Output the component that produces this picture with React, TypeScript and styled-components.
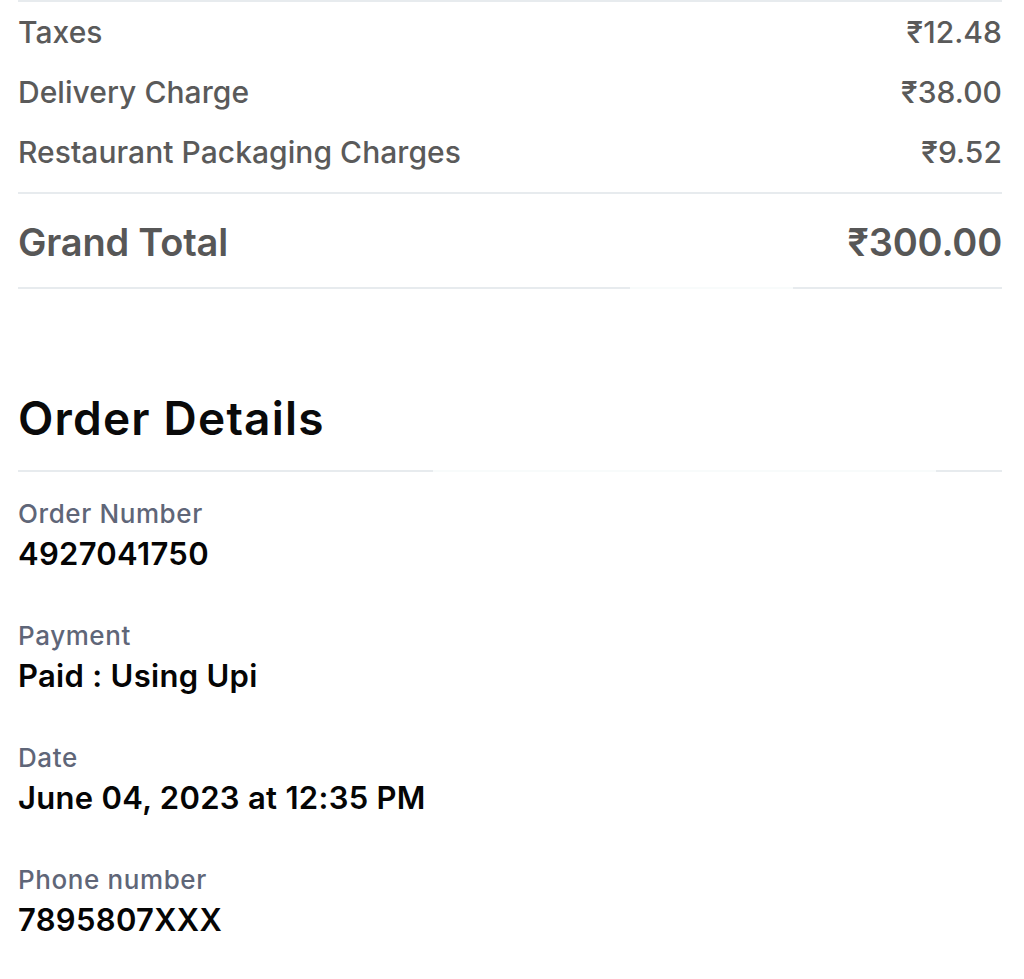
import React from 'react';
import styled, { createGlobalStyle } from 'styled-components';

const GlobalStyle = createGlobalStyle`
  html, body {
    margin: 0;
    padding: 0;
    background: #ffffff;
  }
  body {
    font-family: Inter, "Noto Sans", "Liberation Sans", sans-serif;
    -webkit-font-smoothing: antialiased;
  }
`;

const Page = styled.div`
  width: 984px;
  padding: 0 22px 0 18px;
  display: flex;
  flex-direction: column;
`;

// thin rule between sections; optional faded stretch in the middle
const Divider = styled.div<{ $gapFrom?: number; $gapTo?: number }>`
  height: 2px;
  width: 100%;
  background: ${({ $gapFrom, $gapTo }) =>
    $gapFrom !== undefined && $gapTo !== undefined
      ? `linear-gradient(to right, #e7ebee 0, #e7ebee ${$gapFrom}px, #f8fbfb ${$gapFrom}px, #f8fbfb ${$gapTo}px, #e7ebee ${$gapTo}px)`
      : '#e7ebee'};
`;

const Bill = styled.div`
  display: flex;
  flex-direction: column;
  padding: 0 0 10px;
`;

const BillRow = styled.div`
  height: 60px;
  display: flex;
  align-items: center;
  justify-content: space-between;
  color: #5a5a5a;
  font-size: 30px;
  font-weight: 500;
  letter-spacing: 0.05px;
`;

const TotalRow = styled.div`
  height: 93px;
  padding-top: 2px;
  box-sizing: border-box;
  display: flex;
  align-items: center;
  justify-content: space-between;
  color: #575757;
  font-size: 38px;
  font-weight: 600;
  letter-spacing: -0.2px;
`;

const Heading = styled.h2`
  margin: 0;
  height: 181px;
  padding-bottom: 24px;
  box-sizing: border-box;
  display: flex;
  align-items: flex-end;
  font-size: 46px;
  font-weight: 600;
  color: #0a0a0a;
  letter-spacing: 1.2px;
`;

const Details = styled.div`
  display: flex;
  flex-direction: column;
  gap: 44px;
  padding-top: 24px;
`;

const Field = styled.div`
  display: flex;
  flex-direction: column;
  gap: 2px;
`;

const Label = styled.div`
  font-size: 26px;
  line-height: 35px;
  font-weight: 500;
  color: #5f6678;
  letter-spacing: 0.6px;
`;

const Value = styled.div`
  font-size: 31px;
  line-height: 41px;
  font-weight: 600;
  color: #050505;
  letter-spacing: 0.3px;
`;

const charges = [
  { name: 'Taxes', amount: '₹12.48' },
  { name: 'Delivery Charge', amount: '₹38.00' },
  { name: 'Restaurant Packaging Charges', amount: '₹9.52' },
];

const orderInfo = [
  { label: 'Order Number', value: '4927041750' },
  { label: 'Payment', value: 'Paid : Using Upi' },
  { label: 'Date', value: 'June 04, 2023 at 12:35 PM' },
  { label: 'Phone number', value: '7895807XXX' },
];

export default function App() {
  return (
    <>
      <GlobalStyle />
      <Page>
        <Divider />
        <Bill>
          {charges.map((c) => (
            <BillRow key={c.name}>
              <span>{c.name}</span>
              <span>{c.amount}</span>
            </BillRow>
          ))}
        </Bill>
        <Divider />
        <TotalRow>
          <span>Grand Total</span>
          <span>₹300.00</span>
        </TotalRow>
        <Divider $gapFrom={612} $gapTo={775} />
        <Heading>Order Details</Heading>
        <Divider $gapFrom={415} $gapTo={918} />
        <Details>
          {orderInfo.map((f) => (
            <Field key={f.label}>
              <Label>{f.label}</Label>
              <Value>{f.value}</Value>
            </Field>
          ))}
        </Details>
      </Page>
    </>
  );
}
